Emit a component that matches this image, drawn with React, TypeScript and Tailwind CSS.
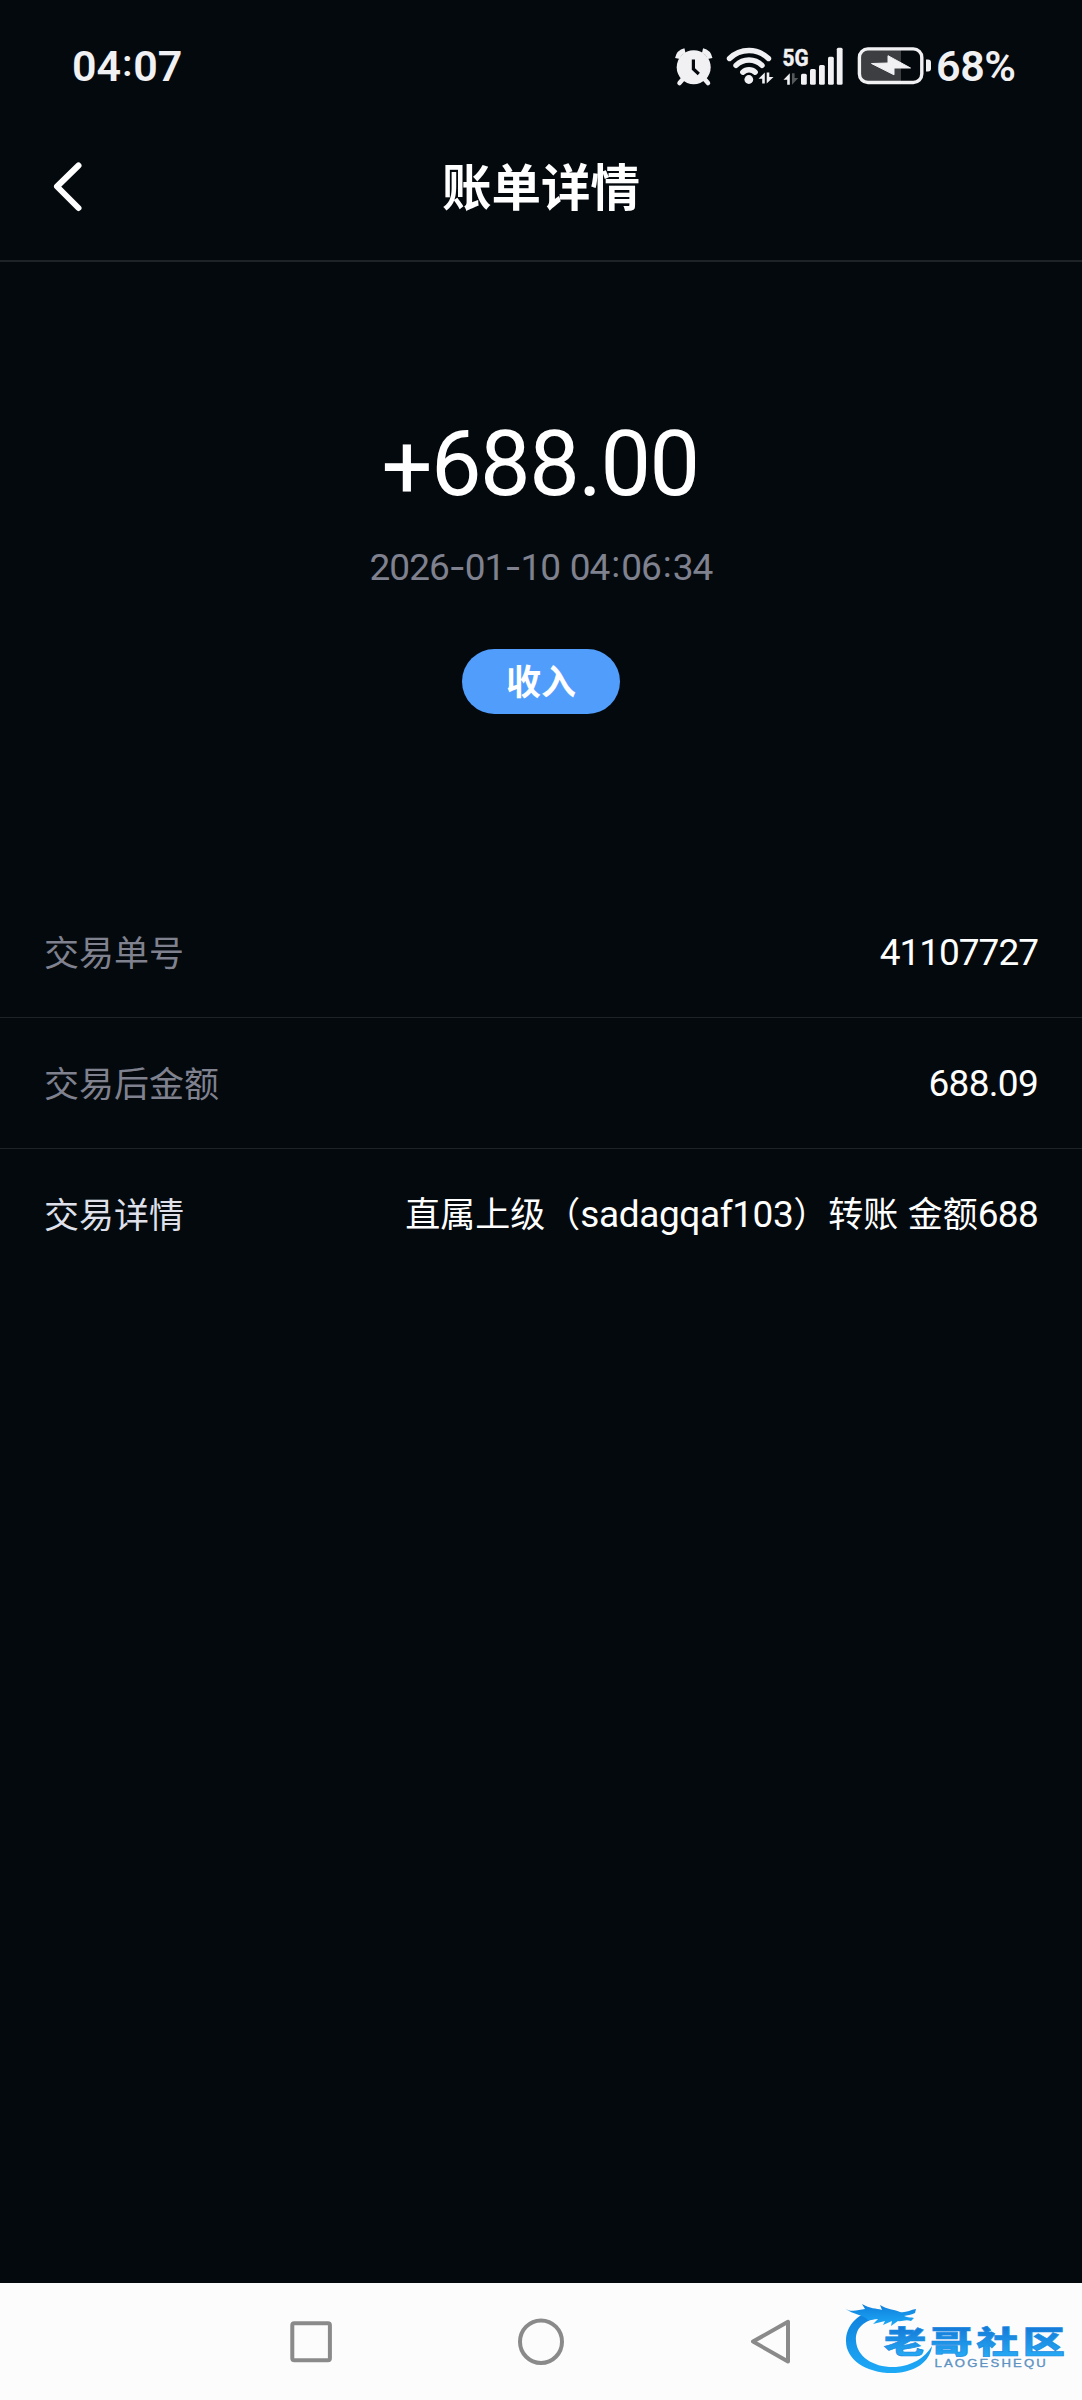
import { ReactNode } from 'react'

interface DetailRow {
  label: string
  value: ReactNode
  labelClass: string
}

const rows: DetailRow[] = [
  {
    label: '交易单号',
    value: <span className="font-[Roboto] text-[37px] tracking-[-1px]">41107727</span>,
    labelClass: 'text-[#7f818f]',
  },
  {
    label: '交易后金额',
    value: <span className="font-[Roboto] text-[37px] tracking-[-0.7px]">688.09</span>,
    labelClass: 'text-[#7f818f]',
  },
  {
    label: '交易详情',
    value: (
      <>
        直属上级（<span className="font-[Roboto] text-[37px] tracking-[-0.4px]">sadagqaf103</span>）转账
        <span className="ml-[1.5px]"> 金额</span>
        <span className="font-[Roboto] text-[37px] tracking-[-0.7px]">688</span>
      </>
    ),
    labelClass: 'text-[#dfe0ea]',
  },
]

function AlarmIcon() {
  return (
    <svg width="48" height="48" viewBox="0 0 48 48" fill="none">
      <path d="M5.5 16.5A10 10 0 0 1 13 8.8" stroke="#f1f1f3" strokeWidth="5" />
      <path d="M38 16.5A10 10 0 0 0 30.5 8.8" stroke="#f1f1f3" strokeWidth="5" />
      <path d="M11 37l-3.5 4M32.5 37l3.5 4" stroke="#f1f1f3" strokeWidth="4.5" strokeLinecap="round" />
      <circle cx="21.7" cy="25.3" r="17" fill="#f1f1f3" />
      <path d="M21.4 17.5v9.5l5.4 5" stroke="#04090d" strokeWidth="3.2" />
    </svg>
  )
}

function WifiIcon() {
  return (
    <svg width="58" height="48" viewBox="0 0 58 48" fill="none">
      <g stroke="#f1f1f3" strokeWidth="5.4" strokeLinecap="round">
        <path d="M9.5 16.5a27.8 27.8 0 0 1 39 0" />
        <path d="M16 23.4a18.5 18.5 0 0 1 26 0" />
        <path d="M22.8 30.2a9 9 0 0 1 12.4 0" />
      </g>
      <circle cx="28.8" cy="37.5" r="4.4" fill="#f1f1f3" />
      <path d="M38.5 36.8L44.8 30.5V41.5H42.2V36.8zM46.7 30.5H49.3V35H53.5L46.7 41.5z" fill="#f1f1f3" />
    </svg>
  )
}

function SignalIcon() {
  return (
    <svg width="74" height="48" viewBox="0 0 74 48">
      <text
        x="4.5"
        y="24"
        textLength="26"
        lengthAdjust="spacingAndGlyphs"
        className="fill-[#f1f1f3] stroke-[#f1f1f3] stroke-[0.5px] font-[Roboto] text-[24.5px] font-bold"
      >
        5G
      </text>
      <path d="M5.5 37.8L11.8 31.3V42.7H9.2V37.8z" fill="#f1f1f3" />
      <path d="M14 31.3H16.6V36H20.3L14 42.7z" fill="#55585b" />
      <g fill="#f1f1f3">
        <rect x="23" y="31.7" width="5.8" height="11" rx="1.5" />
        <rect x="32" y="27" width="5.8" height="15.7" rx="1.5" />
        <rect x="41" y="23" width="5.8" height="19.7" rx="1.5" />
        <rect x="50" y="14.7" width="5.8" height="28" rx="1.5" />
        <rect x="58.8" y="5.8" width="5.8" height="36.9" rx="1.5" />
      </g>
    </svg>
  )
}

function BatteryIcon() {
  return (
    <svg width="84" height="48" viewBox="0 0 84 48">
      <path d="M49 7H15q-8 0-8 8v17q0 8 8 8h34z" fill="#3c3e41" />
      <rect x="7.4" y="6.9" width="62.4" height="33.6" rx="8.5" fill="none" stroke="#f1f1f3" strokeWidth="3.4" />
      <path d="M74 17.5h2q3 0 3 3v6q0 3-3 3h-2z" fill="#f1f1f3" />
      <path d="M19.5 21.5L36 21V13.7L58.5 26H42V32.8z" fill="#f1f1f3" stroke="#f1f1f3" strokeLinejoin="round" />
    </svg>
  )
}

function Watermark() {
  return (
    <svg
      className="absolute top-[11px] right-0"
      width="244"
      height="90"
      viewBox="0 0 244 90"
    >
      <defs>
        <linearGradient id="dragon" x1="0" y1="0" x2="0" y2="1">
          <stop offset="0" stopColor="#0f7fdc" />
          <stop offset="1" stopColor="#1eaaf7" />
        </linearGradient>
        <linearGradient id="brand" x1="0" y1="0" x2="0" y2="1">
          <stop offset="0.2" stopColor="#1477d6" />
          <stop offset="0.85" stopColor="#25a7f2" />
        </linearGradient>
      </defs>
      <g fill="url(#dragon)">
        {/* tail */}
        <path d="M38 16C22 18 8 30 8 47C8 66 29 80 57 79C77 78 92 68 94 52C87 64 73 72 58 73C36 74 19 63 18 47C17 34 26 26 42 24L50 16z" />
        {/* head, horns and whiskers */}
        <path d="M6 14C13 19 20 16 27 15L24 10C32 15 38 14 44 16L42 11C50 16 55 15 62 18C68 19 72 16 78 15L77 19C73 21 69 21 66 22C70 24 73 23 76 24L73 27C67 25 64 28 60 27L53 32L54 27L45 31L47 27L35 30L40 25L30 26C26 21 16 21 6 14z" />
      </g>
      <g transform="translate(46 58.5) scale(1.36 1)">
        <text
          x="0"
          y="0"
          textLength="133"
          className="fill-[url(#brand)] stroke-[#1b8de3] stroke-[0.7px] font-['Noto_Sans_CJK_SC',sans-serif] text-[31px] font-black"
        >
          老哥社区
        </text>
      </g>
      <g transform="translate(96.5 73) scale(1.25 1)">
        <text
          x="0"
          y="0"
          textLength="89"
          className="fill-[#5d92c2] stroke-[#5d92c2] stroke-[0.3px] font-['Liberation_Sans',sans-serif] text-[10.5px]"
        >
          LAOGESHEQU
        </text>
      </g>
    </svg>
  )
}

export default function App() {
  return (
    <div className="flex h-[2400px] w-[1082px] flex-col bg-[#04090d] font-['Noto_Sans_CJK_SC',sans-serif] text-white">
      {/* Status bar */}
      <div className="flex h-[114px] items-center justify-between pt-[18px] pr-[66px] pl-[72px] font-[Roboto] text-[#f1f1f3]">
        <span className="text-[43px] leading-none font-semibold">
          04<span className="relative -top-[5px] px-[1px] text-[37px]">:</span>07
        </span>
        <div className="flex items-center">
          <AlarmIcon />
          <WifiIcon />
          <SignalIcon />
          <BatteryIcon />
          <span className="w-[80px] text-[43px] leading-none font-semibold tracking-[-0.4px]">68%</span>
        </div>
      </div>

      {/* Header */}
      <header className="grid h-[148px] grid-cols-[120px_1fr_120px] items-center border-b-2 border-[#1e2327]">
        <button className="pl-[51px]" aria-label="返回">
          <svg width="34" height="54" viewBox="0 0 34 54" fill="none">
            <path d="M27.5 5.5L6 26.5l21.5 21.5" stroke="#fff" strokeWidth="6" strokeLinecap="round" strokeLinejoin="round" />
          </svg>
        </button>
        <h1 className="pb-[4px] text-center text-[49.5px] leading-none font-bold">账单详情</h1>
      </header>

      {/* Amount */}
      <section className="flex h-[625px] flex-col items-center pt-[157px]">
        <div className="pr-[2px] font-[Roboto] text-[90px] leading-[92px] tracking-[-1.5px]">
          <span className="relative top-[3px] font-[370]">+</span>688.00
        </div>
        <div className="mt-[36px] font-[Roboto] text-[37px] leading-[40px] tracking-[-1px] text-[#7f818f] [word-spacing:1.5px]">
          2026<span className="font-[Inter]">-</span>01<span className="font-[Inter]">-</span>10 04
          <span className="relative -top-[3px] px-[2px]">:</span>06
          <span className="relative -top-[3px] px-[2px]">:</span>34
        </div>
        <span className="mt-[61px] flex h-[65px] w-[158px] items-center justify-center rounded-full bg-[#519dfc] pb-[4px] text-[35px] leading-none font-bold">
          收入
        </span>
      </section>

      {/* Details */}
      <section className="flex-1">
        {rows.map((row) => (
          <div
            key={row.label}
            className="flex h-[131px] items-center justify-between border-b border-[#1e2327] px-[44px] pb-[2px] text-[35px] leading-none last:border-b-0 last:pb-[3px]"
          >
            <span className={`${row.labelClass} pb-[2px]`}>{row.label}</span>
            <span>{row.value}</span>
          </div>
        ))}
      </section>

      {/* System navigation */}
      <nav className="relative flex h-[117px] items-center bg-[#fcfcfc] pl-[287px]">
        <svg width="48" height="54" viewBox="0 0 48 54" fill="none" stroke="#8a8a8a" strokeWidth="4">
          <rect x="5.3" y="8.2" width="37.6" height="37" rx="2" />
        </svg>
        <svg className="ml-[179px]" width="54" height="54" viewBox="0 0 54 54" fill="none" stroke="#8a8a8a" strokeWidth="4">
          <ellipse cx="27" cy="26.7" rx="21" ry="21.3" />
        </svg>
        <svg className="ml-[178px]" width="54" height="54" viewBox="0 0 54 54" fill="none" stroke="#8a8a8a" strokeWidth="4">
          <path d="M42 6.8v39.6L7 26.6z" strokeLinejoin="round" />
        </svg>
        <Watermark />
      </nav>
    </div>
  )
}
